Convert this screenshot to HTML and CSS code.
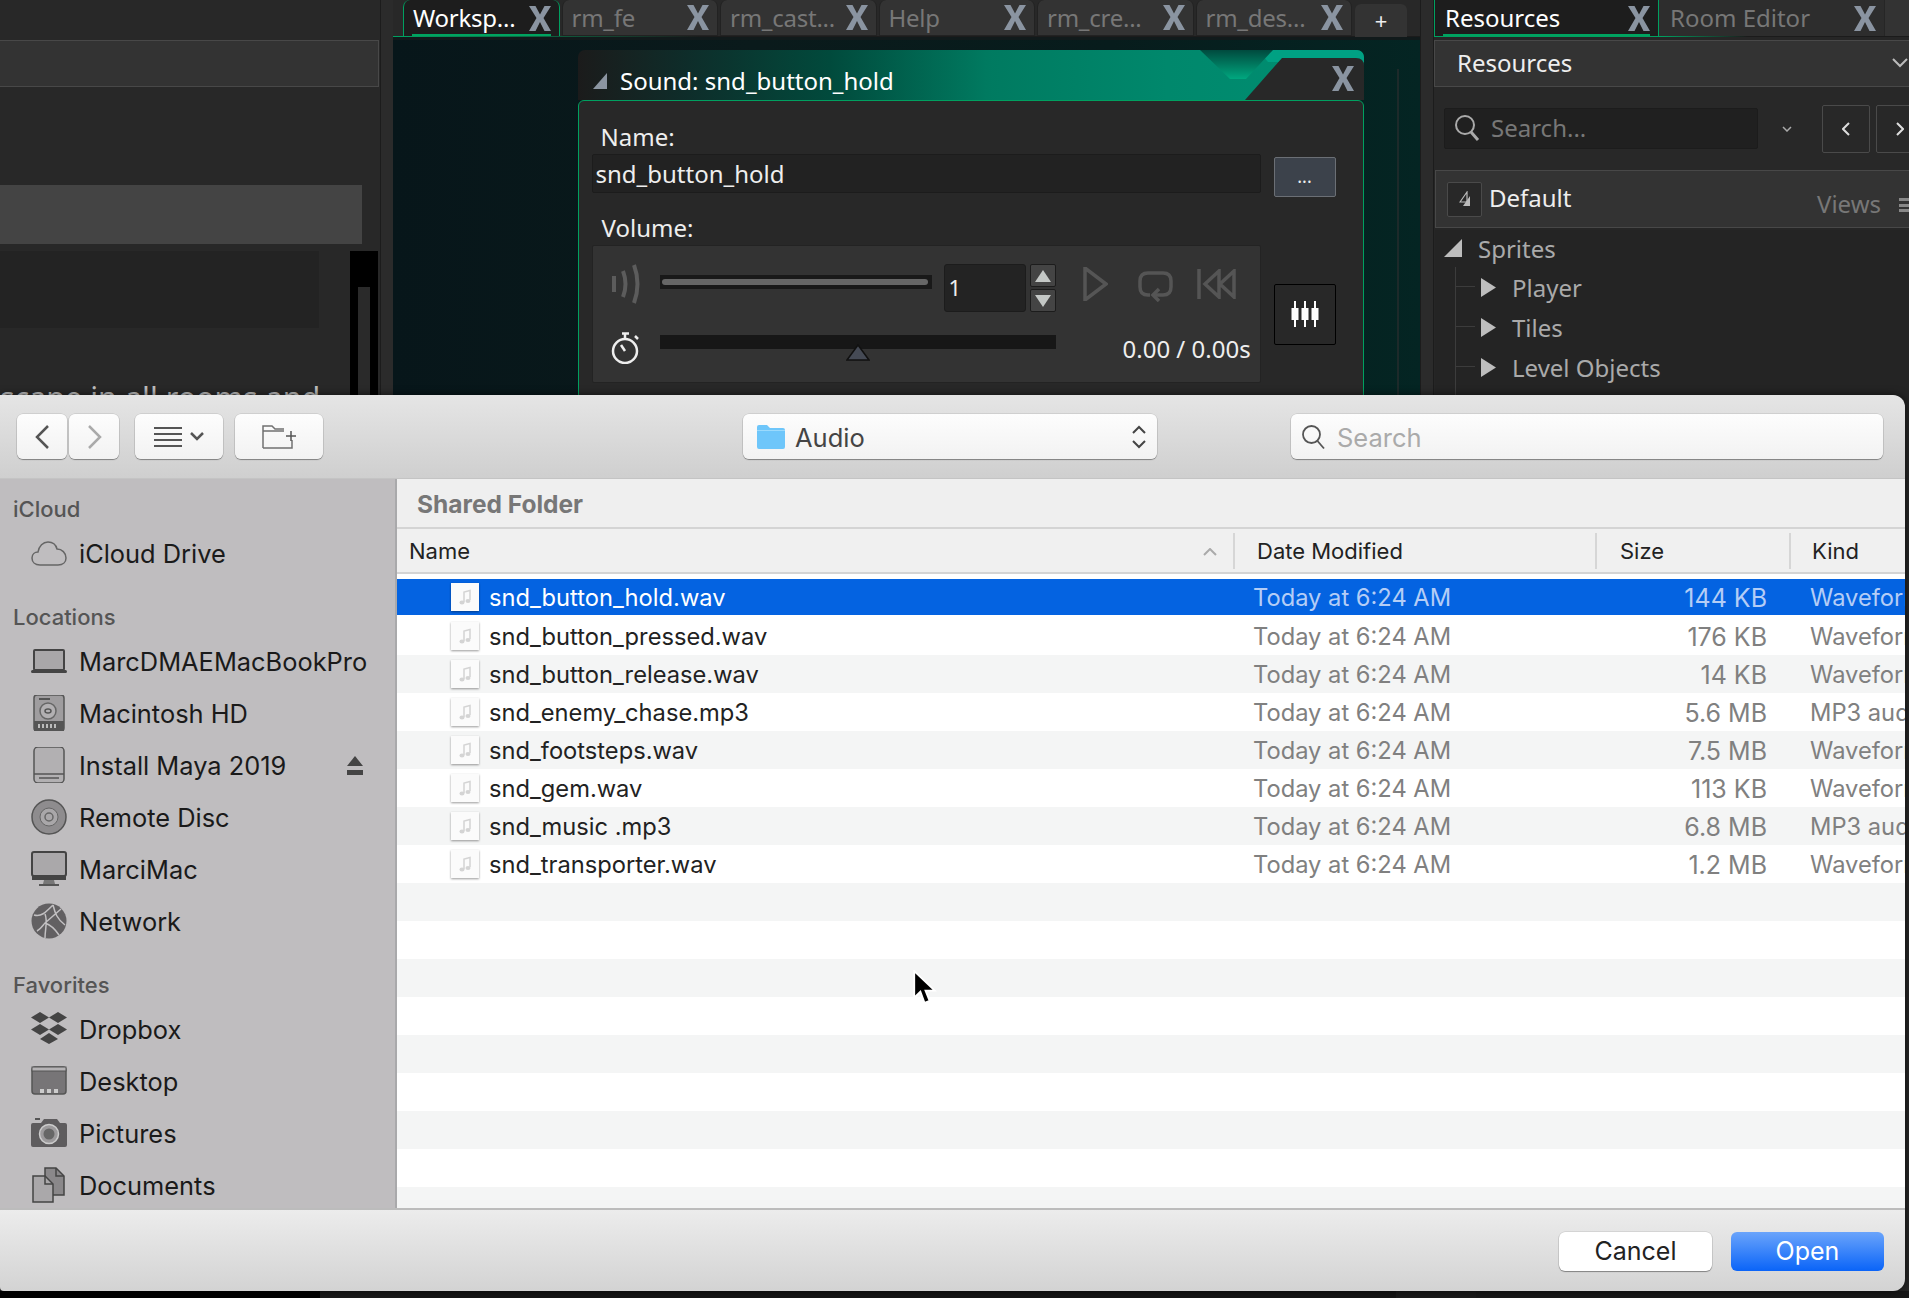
FILE: index.html
```html
<!DOCTYPE html>
<html lang="en">
<head>
<meta charset="utf-8">
<title>Sound: snd_button_hold</title>
<link rel="stylesheet" href="styles.css">
</head>
<body>
<svg class="defs" width="0" height="0" aria-hidden="true">
  <defs>
    <symbol id="x" viewBox="0 0 22 25"><path d="M0 0H6.500L11 8.500L15.500 0H22L14.500 12L22 25H15.500L11 16L6.500 25H0L7.500 12Z"/></symbol>
    <symbol id="tri-r" viewBox="0 0 15 19"><path d="M0 0L15 9.500L0 19Z"/></symbol>
    <symbol id="doc" viewBox="0 0 28 28">
      <rect x="0" y="0" width="28" height="28" fill="#fbfbfb"/>
      <path d="M13 19V9L19 7.500V17" fill="none" stroke="#d4d4d4" stroke-width="1.500"/>
      <ellipse cx="11" cy="19.500" rx="2.500" ry="2" fill="#d4d4d4"/>
      <ellipse cx="17" cy="18" rx="2.500" ry="2" fill="#d4d4d4"/>
    </symbol>
  </defs>
</svg>

<div class="ide">
  <aside class="left">
    <div class="left-head"></div>
    <div class="left-hi"></div>
    <div class="left-row">
      <div class="left-box"></div>
      <div class="left-scroll"><div class="left-thumb"></div></div>
    </div>
    <div class="left-text">scape in all rooms and</div>
  </aside>
  <div class="gutter"></div>

  <main class="center">
    <div class="tabs">
      <div class="tab active"><span class="tab-label">Worksp...</span><svg class="tab-x"><use href="#x"/></svg></div>
      <div class="tab"><span class="tab-label">rm_fe</span><svg class="tab-x"><use href="#x"/></svg></div>
      <div class="tab"><span class="tab-label">rm_cast...</span><svg class="tab-x"><use href="#x"/></svg></div>
      <div class="tab"><span class="tab-label">Help</span><svg class="tab-x"><use href="#x"/></svg></div>
      <div class="tab"><span class="tab-label">rm_cre...</span><svg class="tab-x"><use href="#x"/></svg></div>
      <div class="tab"><span class="tab-label">rm_des...</span><svg class="tab-x"><use href="#x"/></svg></div>
      <div class="tab-add">+</div>
    </div>
    <div class="workspace">
      <section class="sound">
        <header class="sound-title">
          <svg class="sound-deco" width="786" height="50" viewBox="0 0 786 50">
            <defs><linearGradient id="notch" x1="0" y1="0" x2="0" y2="1"><stop offset="0" stop-color="#004a3e"/><stop offset="1" stop-color="#00a77f"/></linearGradient></defs>
            <path d="M680 0H778Q786 0 786 8V12H690Z" fill="#00a183"/>
            <path d="M622 0H695L668 29H652Z" fill="url(#notch)"/>
            <path d="M667 50L704 8H778Q786 8 786 16V50Z" fill="#282828"/>
          </svg>
          <svg class="sound-tri" width="14" height="16" viewBox="0 0 14 16"><path d="M14 0V16H0Z" fill="#8b95a1"/></svg>
          <span class="sound-name">Sound: snd_button_hold</span>
          <svg class="sound-x"><use href="#x"/></svg>
        </header>
        <div class="sound-body">
          <div class="field-label first">Name:</div>
          <div class="name-row">
            <div class="name-input">snd_button_hold</div>
            <div class="dots">...</div>
          </div>
          <div class="field-label vol">Volume:</div>
          <div class="vol-row">
            <div class="vol-box">
              <div class="vol-line">
                <svg class="ic-speaker" width="29" height="40" viewBox="0 0 29 40" fill="none" stroke="#5c5c5c" stroke-width="4"><path d="M3 12V28M12 7Q17 20 12 33M23 1Q30 20 23 39"/></svg>
                <div class="slider"><div class="slider-fill"></div></div>
                <div class="spin-input">1</div>
                <div class="spin">
                  <div class="spin-btn"><svg width="16" height="12" viewBox="0 0 16 12"><path d="M8 0L16 12H0Z" fill="#c4c8c6"/></svg></div>
                  <div class="spin-btn"><svg width="16" height="12" viewBox="0 0 16 12"><path d="M0 0H16L8 12Z" fill="#c4c8c6"/></svg></div>
                </div>
                <svg class="ic-play" width="25" height="34" viewBox="0 0 25 34" fill="none" stroke="#555" stroke-width="3.500"><path d="M2 1V33L23 17Z"/></svg>
                <svg class="ic-loop" width="35" height="31" viewBox="0 0 35 31" fill="none" stroke="#555" stroke-width="3.500"><path d="M12 24H10Q2 24 2 16V10Q2 2 10 2H25Q33 2 33 10V16Q33 24 25 24H15"/><path d="M21 18L15 24L21 30"/></svg>
                <svg class="ic-rew" width="39" height="30" viewBox="0 0 39 30" fill="none" stroke="#555" stroke-width="3.500"><path d="M2 0V30M22 2L8 15L22 28ZM37 2L23 15L37 28Z"/></svg>
              </div>
              <div class="seek-line">
                <svg width="29" height="32" viewBox="0 0 29 32" fill="none" stroke="#eee" stroke-width="2.500"><circle cx="14" cy="19" r="12"/><path d="M11 1.500H18M14 2V7M24 4L27 7"/><path d="M14 19L10 13"/></svg>
                <div class="seek"><svg class="seek-mark" width="24" height="17" viewBox="0 0 24 17"><path d="M12 1L23 16H1Z" fill="#454a55" stroke="#111" stroke-width="1.500"/></svg></div>
                <div class="time">0.00 / 0.00s</div>
              </div>
            </div>
            <div class="mixer"><svg width="30" height="26" viewBox="0 0 30 26" fill="#fff"><path d="M4 0H6V7H8.500V19H6V26H4V19H1.500V7H4Z"/><path d="M14 0H16V7H18.500V19H16V26H14V19H11.500V7H14Z"/><path d="M24 0H26V7H28.500V19H26V26H24V19H21.500V7H24Z"/></svg></div>
          </div>
        </div>
      </section>
      <div class="ws-line"></div>
    </div>
  </main>
  <div class="gutter wide"></div>

  <aside class="right">
    <div class="rtabs">
      <div class="rtab active"><span class="tab-label">Resources</span><svg class="tab-x"><use href="#x"/></svg></div>
      <div class="rtab"><span class="tab-label">Room Editor</span><svg class="tab-x"><use href="#x"/></svg></div>
      <div class="rtab-more"></div>
    </div>
    <div class="res-head">
      <span>Resources</span>
      <svg class="res-chev" width="16" height="10" viewBox="0 0 16 10" fill="none" stroke="#bbb" stroke-width="2"><path d="M1 1L8 8L15 1"/></svg>
    </div>
    <div class="res-search">
      <div class="res-input">
        <svg width="26" height="28" viewBox="0 0 26 28" fill="none" stroke="#aaa" stroke-width="2"><circle cx="11" cy="11" r="9"/><path d="M17 18L24 26" stroke-width="3"/></svg>
        <span>Search...</span>
      </div>
      <svg class="res-small" width="10" height="6" viewBox="0 0 10 6" fill="none" stroke="#aaa" stroke-width="1.500"><path d="M1 1L5 5L9 1"/></svg>
      <div class="res-nav"><svg width="8" height="14" viewBox="0 0 8 14" fill="none" stroke="#ddd" stroke-width="2"><path d="M7 1L1 7L7 13"/></svg></div>
      <div class="res-nav"><svg width="8" height="14" viewBox="0 0 8 14" fill="none" stroke="#ddd" stroke-width="2"><path d="M1 1L7 7L1 13"/></svg></div>
    </div>
    <div class="res-default">
      <div class="def-icon"><svg width="12" height="16" viewBox="0 0 12 16"><path d="M8 1L1 11H8Z" fill="none" stroke="#bbb" stroke-width="1.200"/><path d="M11 5V15H4Z" fill="#bbb"/></svg></div>
      <span class="def-name">Default</span>
      <span class="def-views">Views</span>
      <div class="def-menu"></div>
    </div>
    <div class="tree">
      <div class="tree-root">
        <svg width="18" height="18" viewBox="0 0 18 18"><path d="M18 0V18H0Z" fill="#bdbdbd"/></svg>
        <span>Sprites</span>
      </div>
      <div class="tree-kids">
        <div class="tree-item"><svg class="tree-tri"><use href="#tri-r"/></svg><span>Player</span></div>
        <div class="tree-item"><svg class="tree-tri"><use href="#tri-r"/></svg><span>Tiles</span></div>
        <div class="tree-item"><svg class="tree-tri"><use href="#tri-r"/></svg><span>Level Objects</span></div>
      </div>
    </div>
  </aside>
</div>
<div class="status">
  <div class="st-a"></div><div class="st-b"></div><div class="st-c"></div><div class="st-b"></div>
</div>

<div class="dialog">
  <div class="toolbar">
    <div class="tb-btn nav"><svg width="15" height="24" viewBox="0 0 15 24" fill="none" stroke="#555" stroke-width="2.500"><path d="M13 1L2 12L13 23"/></svg></div>
    <div class="tb-btn nav next"><svg width="15" height="24" viewBox="0 0 15 24" fill="none" stroke="#aaa" stroke-width="2.500"><path d="M2 1L13 12L2 23"/></svg></div>
    <div class="tb-btn wide view">
      <svg width="28" height="20" viewBox="0 0 28 20" fill="#555"><rect y="0" width="28" height="2"/><rect y="6" width="28" height="2"/><rect y="12" width="28" height="2"/><rect y="18" width="28" height="2"/></svg>
      <svg width="14" height="9" viewBox="0 0 14 9" fill="none" stroke="#555" stroke-width="2.500"><path d="M1 1L7 7L13 1"/></svg>
    </div>
    <div class="tb-btn wide folder"><svg width="34" height="24" viewBox="0 0 34 24" fill="none" stroke="#707070" stroke-width="1.500"><path d="M1 23V1H10L13 4H22M1 6H22M30 15V23H1"/><path d="M24 11H34M29 6V16" stroke="#555"/></svg></div>
    <div class="popup">
      <svg width="30" height="25" viewBox="0 0 30 25"><path d="M1 3Q1 1 3 1H11L14 4H27Q29 4 29 6V23Q29 25 27 25H3Q1 25 1 23Z" fill="#6ec6fa"/><rect x="1" y="6" width="28" height="1" fill="#9bdafc"/></svg>
      <span class="popup-text">Audio</span>
      <svg class="popup-arrows" width="14" height="24" viewBox="0 0 14 24" fill="none" stroke="#444" stroke-width="2"><path d="M1 8L7 2L13 8M1 16L7 22L13 16"/></svg>
    </div>
    <div class="search">
      <svg width="25" height="26" viewBox="0 0 25 26" fill="none" stroke="#555" stroke-width="1.800"><circle cx="10.500" cy="10.500" r="8.500"/><path d="M16.500 17L23 24.500"/></svg>
      <span>Search</span>
    </div>
  </div>

  <div class="content">
    <nav class="sidebar">
      <div class="side-head">iCloud</div>
      <div class="side-item">
        <svg class="side-ic" viewBox="0 0 36 36" fill="none" stroke="#666" stroke-width="1.500"><path d="M9 30C4 30 1 27 1 23C1 19 4 17 7 17C8 11 12 7 17 7C22 7 25 10 26 14C31 14 35 18 35 23C35 27 32 30 27 30Z"/></svg>
        <span>iCloud Drive</span>
      </div>
      <div class="side-head gap">Locations</div>
      <div class="side-item">
        <svg class="side-ic" viewBox="0 0 36 36"><rect x="3" y="7" width="30" height="20" rx="1" fill="#a9a7a9" stroke="#444" stroke-width="2"/><rect x="0" y="27" width="36" height="3" rx="1.500" fill="#444"/></svg>
        <span>MarcDMAEMacBookPro</span>
      </div>
      <div class="side-item">
        <svg class="side-ic" viewBox="0 0 36 36"><rect x="3" y="0" width="30" height="36" rx="3" fill="#9f9d9f" stroke="#555" stroke-width="1.500"/><rect x="3" y="26" width="30" height="10" fill="#555"/><circle cx="17" cy="16" r="8" fill="#b2b0b2" stroke="#666" stroke-width="1.500"/><ellipse cx="17" cy="16" rx="3" ry="2" fill="none" stroke="#555" stroke-width="1.500"/><path d="M8 4H19" stroke="#555" stroke-width="2"/><path d="M8 29V33M12 29V33M16 29V33M20 29V33M24 29V33" stroke="#bbb" stroke-width="2"/></svg>
        <span>Macintosh HD</span>
      </div>
      <div class="side-item">
        <svg class="side-ic" viewBox="0 0 36 36"><rect x="3" y="0" width="30" height="36" rx="4" fill="#b2b0b2" stroke="#555" stroke-width="1.500"/><path d="M3 27H33" stroke="#555" stroke-width="1.500"/><path d="M8 31H28" stroke="#555" stroke-width="1.500"/></svg>
        <span>Install Maya 2019</span>
        <svg class="eject" width="16" height="19" viewBox="0 0 16 19" fill="#444"><path d="M8 0L16 10H0Z"/><rect y="14" width="16" height="5"/></svg>
      </div>
      <div class="side-item">
        <svg class="side-ic" viewBox="0 0 36 36"><circle cx="18" cy="18" r="17" fill="#8e8c8e" stroke="#555" stroke-width="1.500"/><circle cx="18" cy="18" r="9" fill="#a9a7a9" stroke="#666"/><circle cx="18" cy="18" r="4" fill="none" stroke="#666" stroke-width="1.500"/></svg>
        <span>Remote Disc</span>
      </div>
      <div class="side-item">
        <svg class="side-ic" viewBox="0 0 36 36"><rect x="1" y="1" width="34" height="24" rx="2" fill="#aaa8aa" stroke="#444" stroke-width="2"/><rect x="1" y="25" width="34" height="4" fill="#444"/><path d="M13 29H23L24 33H12Z" fill="#777"/><rect x="8" y="33" width="20" height="2" fill="#555"/></svg>
        <span>MarciMac</span>
      </div>
      <div class="side-item">
        <svg class="side-ic" viewBox="0 0 36 36"><circle cx="18" cy="18" r="17.500" fill="#626062"/><path d="M3 12C10 14 14 10 22 2M14 11C17 18 14 26 14 35M14 20C20 22 24 26 28 32M14 20L30 6M22 2C24 10 26 16 34 22M6 28C10 26 12 22 14 20" fill="none" stroke="#c2c0c2" stroke-width="1.500"/></svg>
        <span>Network</span>
      </div>
      <div class="side-head gap">Favorites</div>
      <div class="side-item">
        <svg class="side-ic" viewBox="0 0 36 36" fill="#444"><path d="M9 1L18 6.500L9 12L0 6.500Z"/><path d="M27 1L36 6.500L27 12L18 6.500Z"/><path d="M9 13L18 18.500L9 24L0 18.500Z"/><path d="M27 13L36 18.500L27 24L18 18.500Z"/><path d="M18 22L27 28L18 33L9 28Z"/></svg>
        <span>Dropbox</span>
      </div>
      <div class="side-item">
        <svg class="side-ic" viewBox="0 0 36 36"><rect x="1" y="4" width="34" height="27" rx="3" fill="#777577" stroke="#555" stroke-width="1.500"/><rect x="1" y="4" width="34" height="4" fill="#b5b3b5" stroke="#555"/><path d="M9 26H13V30H9ZM16 26H20V30H16ZM23 26H27V30H23Z" fill="#ccc"/></svg>
        <span>Desktop</span>
      </div>
      <div class="side-item">
        <svg class="side-ic" viewBox="0 0 36 36"><path d="M0 10Q0 8 2 8H10L13 4H26L29 8H34Q36 8 36 10V30Q36 32 34 32H2Q0 32 0 30Z" fill="#5e5c5e"/><circle cx="18" cy="19" r="9.500" fill="#9c9a9c" stroke="#ccc" stroke-width="1.500"/><circle cx="18" cy="19" r="5.500" fill="#666"/><rect x="4" y="3" width="5" height="2" fill="#555"/></svg>
        <span>Pictures</span>
      </div>
      <div class="side-item">
        <svg class="side-ic" viewBox="0 0 36 36" stroke="#444" stroke-width="1.500"><path d="M14 1H25L33 9V28H14Z" fill="#8a888a"/><path d="M2 9H14L22 17V35H2Z" fill="#aaa8aa"/><path d="M25 1V9H33M14 9V17H22" fill="none"/></svg>
        <span>Documents</span>
      </div>
    </nav>

    <div class="files">
      <div class="crumb">Shared Folder</div>
      <div class="thead">
        <div class="th th-name">Name<svg class="sort" width="14" height="8" viewBox="0 0 14 8" fill="none" stroke="#aaa" stroke-width="2"><path d="M1 7L7 1L13 7"/></svg></div>
        <div class="th th-date">Date Modified</div>
        <div class="th th-size">Size</div>
        <div class="th th-kind">Kind</div>
      </div>
      <div class="rows">
        <div class="row selected"><div class="c-name"><svg class="doc"><use href="#doc"/></svg>snd_button_hold.wav</div><div class="c-date">Today at 6:24 AM</div><div class="c-size">144 KB</div><div class="c-kind">Waveform audio</div></div>
        <div class="row"><div class="c-name"><svg class="doc"><use href="#doc"/></svg>snd_button_pressed.wav</div><div class="c-date">Today at 6:24 AM</div><div class="c-size">176 KB</div><div class="c-kind">Waveform audio</div></div>
        <div class="row alt"><div class="c-name"><svg class="doc"><use href="#doc"/></svg>snd_button_release.wav</div><div class="c-date">Today at 6:24 AM</div><div class="c-size">14 KB</div><div class="c-kind">Waveform audio</div></div>
        <div class="row"><div class="c-name"><svg class="doc"><use href="#doc"/></svg>snd_enemy_chase.mp3</div><div class="c-date">Today at 6:24 AM</div><div class="c-size">5.6 MB</div><div class="c-kind">MP3 audio</div></div>
        <div class="row alt"><div class="c-name"><svg class="doc"><use href="#doc"/></svg>snd_footsteps.wav</div><div class="c-date">Today at 6:24 AM</div><div class="c-size">7.5 MB</div><div class="c-kind">Waveform audio</div></div>
        <div class="row"><div class="c-name"><svg class="doc"><use href="#doc"/></svg>snd_gem.wav</div><div class="c-date">Today at 6:24 AM</div><div class="c-size">113 KB</div><div class="c-kind">Waveform audio</div></div>
        <div class="row alt"><div class="c-name"><svg class="doc"><use href="#doc"/></svg>snd_music .mp3</div><div class="c-date">Today at 6:24 AM</div><div class="c-size">6.8 MB</div><div class="c-kind">MP3 audio</div></div>
        <div class="row"><div class="c-name"><svg class="doc"><use href="#doc"/></svg>snd_transporter.wav</div><div class="c-date">Today at 6:24 AM</div><div class="c-size">1.2 MB</div><div class="c-kind">Waveform audio</div></div>
        <div class="row alt"></div><div class="row"></div><div class="row alt"></div><div class="row"></div><div class="row alt"></div><div class="row"></div><div class="row alt"></div><div class="row"></div><div class="row alt"></div>
      </div>
    </div>
  </div>

  <div class="footer">
    <div class="btn cancel">Cancel</div>
    <div class="btn open">Open</div>
  </div>

  <svg class="cursor" width="25" height="37" viewBox="0 0 24 36"><path d="M2 1V27L8 21L12 32L17 30L13 20H22Z" fill="#000" stroke="#fff" stroke-width="1.800"/></svg>
</div>
</body>
</html>
```
FILE: styles.css
```css
* { box-sizing: border-box; }
html, body { margin: 0; padding: 0; }
body {
  width: 1909px;
  height: 1298px;
  overflow: hidden;
  position: relative;
  background: #181818;
  font-family: "Noto Sans", "Open Sans", sans-serif;
  color: #eee;
}
.defs { position: absolute; }

/* IDE shell */
.ide { display: flex; height: 1291px; background: #282828; }
.gutter { width: 13px; background: #2b2b2b; border-left: 1px solid #1c1c1c; }
.gutter.wide { width: 14px; border-right: 1px solid #1c1c1c; }

.left { width: 380px; padding-top: 40px; overflow: hidden; position: relative; }
.left-head { height: 47px; background: #333; border: 1px solid #484848; border-left: 0; margin-right: 1px; }
.left-hi { height: 59px; width: 362px; margin-top: 98px; background: #444; }
.left-row { display: flex; justify-content: space-between; height: 200px; margin-top: 7px; }
.left-box { width: 319px; height: 77px; background: #232323; }
.left-scroll { width: 28px; margin-right: 2px; background: #000; padding: 36px 8px 0; }
.left-thumb { height: 100%; background: #2a2a2a; }
.left-text { position: absolute; left: 0; top: 377px; font-size: 30.500px; line-height: 40px; color: #bdbdbd; white-space: nowrap; }

/* Tabs */
.center { width: 1027px; display: flex; flex-direction: column; min-width: 0; }
.tabs { display: flex; height: 37px; padding-left: 10px; gap: 2px; background: linear-gradient(90deg, #00a060 0, #00a060 1%, #1b1b1b 30%) bottom / 100% 1px no-repeat, #282828; }
.tab { width: 156.500px; height: 36px; display: flex; align-items: center; justify-content: space-between; padding: 0 8px 0 9px; background: #333; border: 1px solid #222; border-top: 0; border-radius: 7px 7px 0 0; position: relative; }
.tab .tab-label { letter-spacing: -.25px; }
.tab.active { background: #1d1d1d; border: 1px solid #00a060; border-top: 0; border-bottom: 0; }
.tab.active::after, .rtab.active::after { content: ""; position: absolute; left: 8px; right: 8px; bottom: 0; height: 2px; background: #00a35f; }
.tab-label { font-size: 24px; line-height: 30px; color: #777; white-space: nowrap; }
.active .tab-label { color: #fff; }
.tab-x { width: 22px; height: 25px; fill: #8a94a1; flex: none; }
.tab-add { width: 52px; height: 36px; margin-left: 1px; margin-top: 4px; background: #333; border-radius: 6px 6px 0 0; text-align: center; font-size: 22px; line-height: 32px; color: #eee; }

/* Workspace and sound window */
.workspace { flex: 1; position: relative; padding: 13px 0 0 185px; background: linear-gradient(#111a1b, #111a1b) top / 100% 3px no-repeat, linear-gradient(90deg, #07161a 0, #0a1a1b 35%, #071c1c 70%, #042523 100%); overflow: hidden; }
.ws-line { position: absolute; left: 1004px; top: 32px; bottom: 0; width: 2px; background: #1d2a2a; }
.sound { width: 786px; position: relative; }
.sound-title { height: 50px; position: relative; display: flex; align-items: center; border-radius: 7px 7px 0 0; background: linear-gradient(90deg, #1b1b1b 0, #0e2d2a 14%, #014a3c 32%, #007a60 52%, #00886c 75%, #008f72 100%); overflow: hidden; }
.sound-deco { position: absolute; left: 0; top: 0; }
.sound-tri { margin: 12px 0 0 15px; position: relative; }
.sound-name { margin: 12px 0 0 13px; font-size: 24px; line-height: 34px; color: #fff; position: relative; white-space: nowrap; }
.sound-x { position: absolute; right: 10px; top: 16px; width: 22px; height: 25px; fill: #8a94a1; }
.sound-body { height: 1200px; background: #282828; border: 1.500px solid #00a060; border-radius: 6px 6px 0 0; padding: 20px 0 0 12.500px; }
.field-label { font-size: 24px; line-height: 32px; color: #eee; }
.field-label.first { padding-left: 9px; height: 33px; }
.field-label.vol { padding-left: 10px; margin-top: 15px; height: 33px; }
.name-row { display: flex; align-items: flex-start; }
.name-input { width: 669px; height: 39px; background: #222; border: 1px solid #1c1c1c; border-radius: 2px; padding-left: 3px; font-size: 24px; line-height: 37px; color: #eee; }
.dots { width: 62px; height: 40px; margin: 3px 0 0 13px; background: #3c424b; border: 1px solid #6b6f75; border-radius: 2px; text-align: center; font-size: 18px; line-height: 36px; color: #eee; }
.vol-row { display: flex; align-items: center; }
.vol-box { width: 669px; height: 138px; background: #333; border: 1px solid #232323; border-radius: 2px; padding: 18px 0 0 18px; }
.vol-line { display: flex; align-items: center; height: 48px; }
.slider { width: 272px; height: 14px; margin: -12px 12px 0 20px; padding: 4px 2px; background: #191919; }
.slider-fill { height: 6px; width: 266px; background: #666; border-radius: 3px; }
.ic-speaker { flex: none; margin-top: -8px; }
.spin-input { width: 82px; height: 48px; background: #232323; border: 1px solid #1c1c1c; border-radius: 3px; padding-left: 4px; font-size: 22px; line-height: 44px; color: #eee; }
.spin { width: 26px; margin: 0 27px 0 4px; display: flex; flex-direction: column; gap: 2px; }
.spin-btn { height: 23px; background: #444; border: 1px solid #1c1c1c; border-radius: 2px; display: flex; align-items: center; justify-content: center; }
.ic-play { flex: none; margin: -8px 30px 0 0; }
.ic-loop { flex: none; margin: -4px 24px 0 0; }
.ic-rew { flex: none; margin-top: -8px; }
.seek-line { display: flex; align-items: flex-start; margin-top: 20px; }
.seek { width: 396px; height: 14px; margin: 3px 0 0 20px; background: #171717; position: relative; }
.seek-mark { position: absolute; left: 186px; top: 9px; }
.time { margin: 2px 0 0 67px; font-size: 24px; line-height: 30px; color: #eee; white-space: nowrap; }
.mixer { width: 62px; height: 61px; margin-left: 13px; background: #282828; border: 1px solid #000; border-radius: 2px; display: flex; align-items: center; justify-content: center; }

/* Right panel */
.right { flex: 1; min-width: 0; overflow: hidden; background: #262626; }
.rtabs { display: flex; height: 37px; width: 475px; background: linear-gradient(90deg, #00a060 0, #00a060 48%, #1b1b1b 66%) bottom / 100% 1px no-repeat; }
.rtab { width: 225px; height: 36px; display: flex; align-items: center; justify-content: space-between; padding: 0 8px 0 11px; background: #2d2d2d; flex: none; position: relative; }
.rtab.active { background: #1d1d1d; border: 1px solid #00a060; border-top: 0; border-bottom: 0; padding-left: 10px; }
.rtab-more { width: 25px; height: 36px; background: #333; margin-left: 1px; }
.res-head { height: 47px; margin-top: 3px; display: flex; align-items: center; justify-content: space-between; padding: 0 0 2px 22px; background: #333; border: 1px solid #484848; width: 480px; font-size: 24px; color: #eee; }
.res-chev { margin-right: 5px; }
.res-search { display: flex; align-items: center; height: 83px; padding-left: 10px; background: #282828; }
.res-input { width: 314px; height: 41px; flex: none; background: #202020; border: 1px solid #1c1c1c; border-radius: 2px; display: flex; align-items: center; padding: 0 0 2px 9px; gap: 11px; font-size: 24px; color: #777; }
.res-small { margin: 0 30px 0 24px; flex: none; }
.res-nav { width: 48px; height: 48px; flex: none; margin-right: 6px; background: #282828; border: 1px solid #4a4a4a; border-radius: 2px; display: flex; align-items: center; justify-content: center; }
.res-default { height: 58px; display: flex; align-items: center; padding-left: 11px; background: #333; border: 1px solid #484848; border-right: 0; margin: 0 0 0 1px; position: relative; }
.def-icon { width: 35px; height: 35px; background: #282828; border: 1px solid #4a4a4a; border-radius: 2px; display: flex; align-items: center; justify-content: center; }
.def-name { margin-left: 7px; padding-bottom: 3px; font-size: 24px; color: #eee; }
.def-views { position: absolute; left: 381px; top: 16px; font-size: 24px; line-height: 34px; color: #777; }
.def-menu { position: absolute; left: 463px; top: 27px; width: 12px; height: 14px; border-top: 3px solid #888; border-bottom: 3px solid #888; background: linear-gradient(#888, #888) center / 100% 3px no-repeat; }
.tree { margin-top: 2px; margin-left: 1px; height: 200px; background: #242424; font-size: 24px; color: #aaa; padding: 0 0 0 9px; }
.tree-root { display: flex; align-items: center; height: 36px; gap: 16px; }
.tree-kids { margin-top: 1px; margin-left: 11px; padding-bottom: 40px; border-left: 1px solid #3c3c3c; }
.tree-item { height: 40px; display: flex; align-items: center; gap: 16px; padding-left: 25px; position: relative; }
.tree-item::before { content: ""; position: absolute; left: 0; top: 19px; width: 19px; height: 1px; background: #3c3c3c; }
.tree-tri { width: 15px; height: 19px; fill: #bdbdbd; flex: none; }

/* Bottom strip */
.status { display: flex; height: 7px; }
.st-a { width: 320px; background: #000; }
.st-b { width: 80px; background: #1a1a1a; }
.st-c { width: 996px; background: #141414; }

/* Open dialog */
.dialog {
  position: absolute;
  left: 0;
  top: 395px;
  width: 1905px;
  height: 896px;
  display: flex;
  flex-direction: column;
  border-radius: 0 12px 12px 4px;
  overflow: hidden;
  font-family: Inter, "Liberation Sans", sans-serif;
  color: #222;
  box-shadow: 0 0 8px rgba(0,0,0,.6);
}
.toolbar { height: 84px; display: flex; align-items: center; padding: 0 0 0 17px; background: linear-gradient(#e5e5e5, #cfcfcf); border-bottom: 1px solid #c4c4c4; flex: none; }
.tb-btn { height: 45px; background: linear-gradient(#fdfdfd, #f2f2f2); border-radius: 6px; box-shadow: 0 1px 1px rgba(0,0,0,.35), 0 0 0 .5px rgba(0,0,0,.15); display: flex; align-items: center; justify-content: center; flex: none; }
.tb-btn.nav { width: 50px; }
.tb-btn.next { margin-left: 2px; }
.tb-btn.wide { width: 88px; }
.tb-btn.view { margin-left: 16px; gap: 8px; }
.tb-btn.folder { margin-left: 12px; }
.popup { width: 414px; height: 45px; margin-left: 420px; padding: 0 11px 0 13px; background: linear-gradient(#fdfdfd, #f2f2f2); border-radius: 6px; box-shadow: 0 1px 1px rgba(0,0,0,.35), 0 0 0 .5px rgba(0,0,0,.15); display: flex; align-items: center; gap: 9px; }
.popup-text { flex: 1; padding-top: 2px; font-size: 25.500px; color: #444; }
.search { width: 592px; height: 45px; margin-left: 134px; padding-left: 10px; background: linear-gradient(#fdfdfd, #f2f2f2); border-radius: 6px; box-shadow: 0 1px 1px rgba(0,0,0,.35), 0 0 0 .5px rgba(0,0,0,.15); display: flex; align-items: center; gap: 11px; font-size: 25.500px; color: #aaa; }
.search span { padding-top: 2px; }

.content { flex: 1; display: flex; min-height: 0; }
.sidebar { width: 397px; padding-top: 10px; background: #bfbdbf; border-right: 2px solid #a9a9ab; overflow: hidden; flex: none; }
.side-head { height: 38px; padding-left: 13px; font-size: 22px; font-weight: 500; line-height: 41px; color: #555; }
.side-head.gap { margin-top: 18px; }
.side-item { height: 52px; display: flex; align-items: center; padding-left: 31px; font-size: 25.400px; color: #1a1a1a; position: relative; }
.side-item span { padding-top: 1px; }
.side-ic { width: 36px; height: 36px; margin-right: 12px; flex: none; }
.eject { position: absolute; left: 347px; top: 17px; }

.files { flex: 1; min-width: 0; display: flex; flex-direction: column; background: #fff; }
.crumb { height: 50px; padding-left: 20px; background: #efefef; border-bottom: 2px solid #d4d4d4; font-size: 24.500px; font-weight: 700; line-height: 50px; color: #777; flex: none; }
.thead { height: 45px; display: grid; grid-template-columns: 836px 362px 194px 116px; align-items: center; background: #f0f0f0; border-bottom: 2px solid #d4d4d4; font-size: 22px; color: #222; flex: none; }
.th { height: 36px; line-height: 36px; border-left: 2px solid #d6d6d6; position: relative; white-space: nowrap; }
.th-name { border-left: 0; padding-left: 12px; }
.th-date { padding-left: 22px; }
.th-size { padding-left: 23px; }
.th-kind { padding-left: 21px; }
.sort { position: absolute; right: 16px; top: 15px; }
.rows { flex: 1; padding-top: 5px; overflow: hidden; }
.row { height: 38px; display: grid; grid-template-columns: 837px 362px 194px 115px; align-items: center; font-size: 23.700px; color: #808080; }
.row.alt { background: #f4f5f5; }
.row.selected { height: 36px; margin-bottom: 2px; background: #0463e1; color: #b4cdf6; }
.c-name { display: flex; align-items: center; padding: 1px 0 0 54px; color: #222; white-space: nowrap; }
.selected .c-name { color: #fff; }
.doc { width: 28px; height: 28px; margin: -1px 10px 0 0; flex: none; filter: drop-shadow(0 1px 1px rgba(0,0,0,.4)); }
.c-date { padding: 1px 0 0 19px; white-space: nowrap; }
.c-size { padding: 1px 23px 0 0; text-align: right; white-space: nowrap; font-size: 25px; }
.c-kind { padding: 1px 0 0 20px; white-space: nowrap; overflow: hidden; }

.footer { height: 83px; flex: none; display: flex; justify-content: flex-end; align-items: flex-start; gap: 19px; padding: 22px 21px 0 0; background: linear-gradient(#ececec, #d3d3d3); border-top: 2px solid #bcbcbc; }
.btn { width: 153px; height: 39px; border-radius: 6px; text-align: center; font-size: 25px; line-height: 38px; }
.cancel { background: #fff; color: #222; box-shadow: 0 1px 1px rgba(0,0,0,.35), 0 0 0 .5px rgba(0,0,0,.15); }
.open { background: linear-gradient(#6aa4fb, #0a64f8); color: #fff; }
.cursor { position: absolute; left: 912px; top: 575px; }
```
